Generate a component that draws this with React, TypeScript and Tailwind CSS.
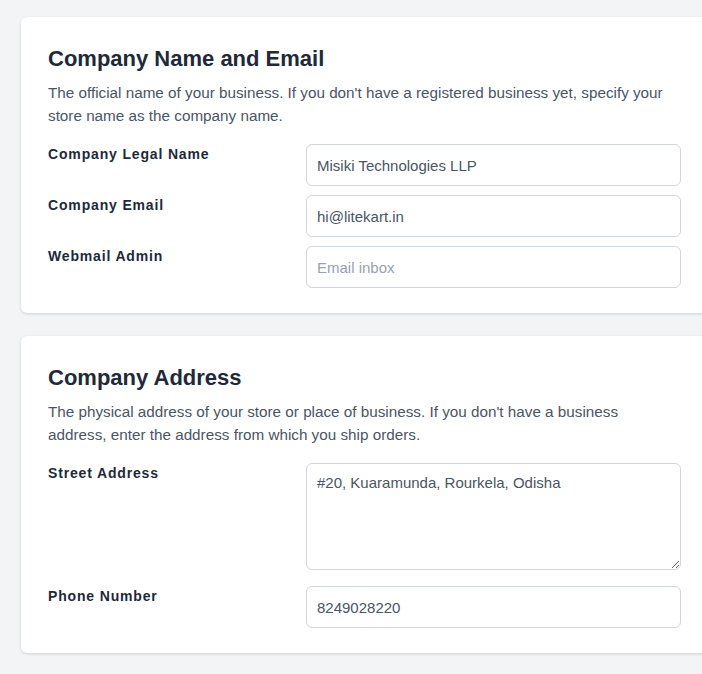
import React from 'react';

const Field: React.FC<{ label: string; children: React.ReactNode }> = ({ label, children }) => (
  <div className="grid grid-cols-[258px_375px] items-start">
    <label className="text-[14px] font-bold tracking-[0.06em] text-gray-800">{label}</label>
    {children}
  </div>
);

const inputCls =
  'block h-[42px] w-full rounded-md border border-gray-300 bg-white px-[10px] text-[15px] text-gray-600 placeholder:text-gray-400 outline-none';

const Card: React.FC<{ title: string; desc: string; children: React.ReactNode }> = ({ title, desc, children }) => (
  <section className="w-[690px] rounded-md bg-white px-[27px] pt-[28px] pb-[25px] shadow-[0_1px_3px_rgba(0,0,0,0.15)]">
    <h2 className="text-[22px] font-bold leading-7 text-gray-800">{title}</h2>
    <p className="mt-[8px] w-[630px] text-[15.25px] leading-[23px] text-gray-600">{desc}</p>
    <div className="mt-[17px] flex flex-col gap-[9px]">{children}</div>
  </section>
);

export default function App() {
  return (
    <div className="min-h-[674px] w-[702px] overflow-hidden bg-gray-100 pt-[17px] pl-[21px] font-['Liberation_Sans',Arial,sans-serif]">
      <div className="flex flex-col gap-[23px]">
        <Card
          title="Company Name and Email"
          desc="The official name of your business. If you don't have a registered business yet, specify your store name as the company name."
        >
          <Field label="Company Legal Name">
            <input className={inputCls} defaultValue="Misiki Technologies LLP" />
          </Field>
          <Field label="Company Email">
            <input className={inputCls} defaultValue="hi@litekart.in" />
          </Field>
          <Field label="Webmail Admin">
            <input className={inputCls} placeholder="Email inbox" />
          </Field>
        </Card>
        <Card
          title="Company Address"
          desc="The physical address of your store or place of business. If you don't have a business address, enter the address from which you ship orders."
        >
          <Field label="Street Address">
            <textarea
              className="mb-[7px] block h-[107px] w-full resize-y rounded-md border border-gray-300 bg-white px-[10px] py-[8px] text-[15px] text-gray-600 outline-none"
              defaultValue="#20, Kuaramunda, Rourkela, Odisha"
            />
          </Field>
          <Field label="Phone Number">
            <input className={inputCls} defaultValue="8249028220" />
          </Field>
        </Card>
      </div>
    </div>
  );
}
